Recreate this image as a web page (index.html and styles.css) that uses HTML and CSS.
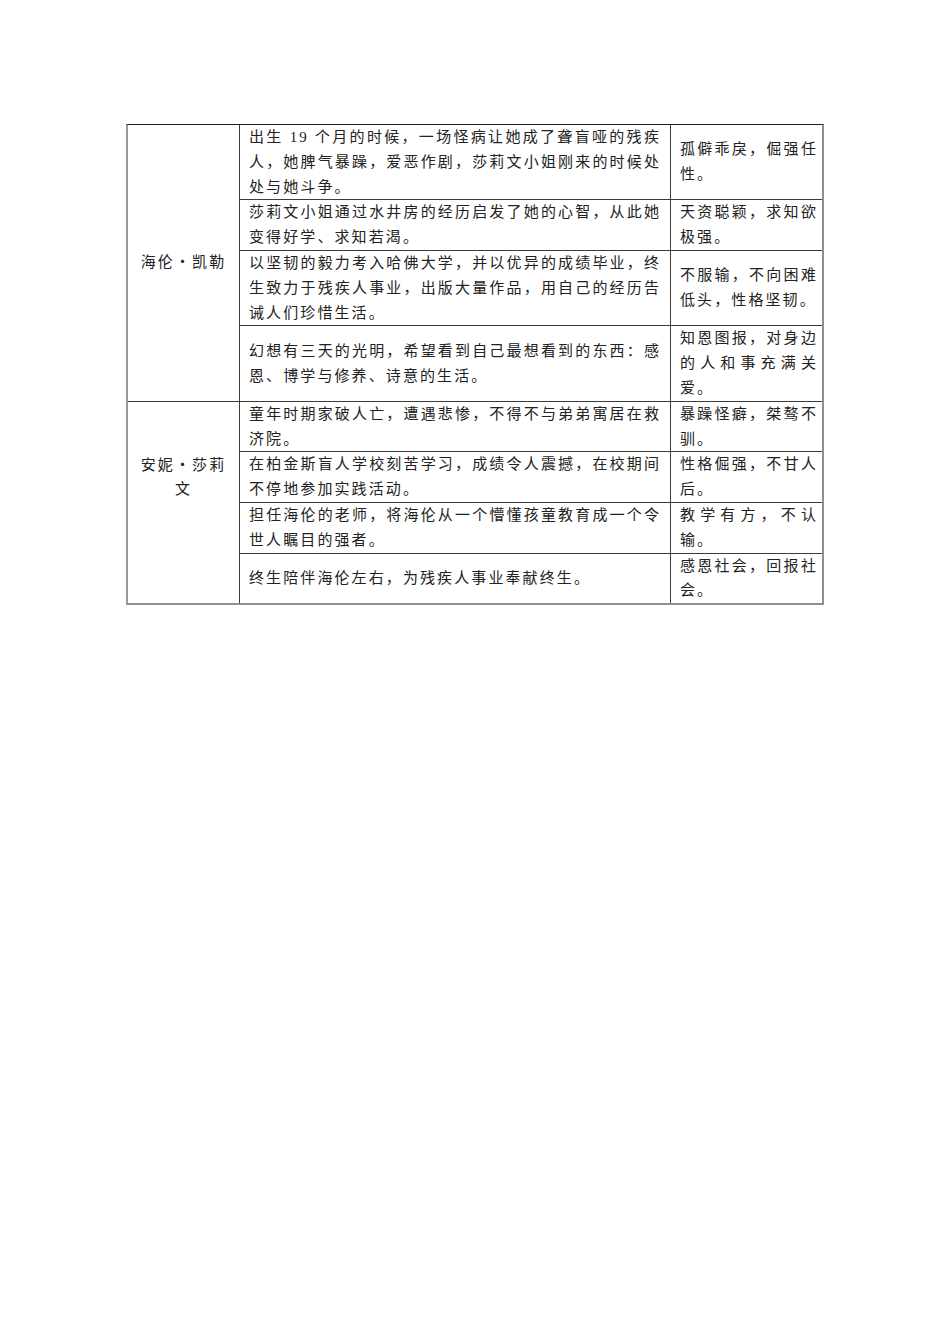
FILE: index.html
```html
<!DOCTYPE html>
<html lang="zh-CN">
<head>
<meta charset="utf-8">
<title>人物表</title>
<link rel="stylesheet" href="styles.css">
</head>
<body>
<div class="page">
  <table class="sheet">
    <colgroup>
      <col class="c-name">
      <col class="c-deed">
      <col class="c-trait">
    </colgroup>
    <tbody>
      <tr>
        <td class="name" rowspan="4">海伦・凯勒</td>
        <td class="deed">出生 19 个月的时候，一场怪病让她成了聋盲哑的残疾人，她脾气暴躁，爱恶作剧，莎莉文小姐刚来的时候处处与她斗争。</td>
        <td class="trait">孤僻乖戾，倔强任性。</td>
      </tr>
      <tr>
        <td class="deed">莎莉文小姐通过水井房的经历启发了她的心智，从此她变得好学、求知若渴。</td>
        <td class="trait">天资聪颖，求知欲极强。</td>
      </tr>
      <tr>
        <td class="deed">以坚韧的毅力考入哈佛大学，并以优异的成绩毕业，终生致力于残疾人事业，出版大量作品，用自己的经历告诫人们珍惜生活。</td>
        <td class="trait">不服输，不向困难低头，性格坚韧。</td>
      </tr>
      <tr class="group-end">
        <td class="deed">幻想有三天的光明，希望看到自己最想看到的东西：感恩、博学与修养、诗意的生活。</td>
        <td class="trait">知恩图报，对身边的人和事充满关爱。</td>
      </tr>
      <tr>
        <td class="name name-low" rowspan="4">安妮・莎莉文</td>
        <td class="deed">童年时期家破人亡，遭遇悲惨，不得不与弟弟寓居在救济院。</td>
        <td class="trait">暴躁怪癖，桀骜不驯。</td>
      </tr>
      <tr>
        <td class="deed">在柏金斯盲人学校刻苦学习，成绩令人震撼，在校期间不停地参加实践活动。</td>
        <td class="trait">性格倔强，不甘人后。</td>
      </tr>
      <tr>
        <td class="deed">担任海伦的老师，将海伦从一个懵懂孩童教育成一个令世人瞩目的强者。</td>
        <td class="trait">教学有方，不认输。</td>
      </tr>
      <tr class="last">
        <td class="deed">终生陪伴海伦左右，为残疾人事业奉献终生。</td>
        <td class="trait">感恩社会，回报社会。</td>
      </tr>
    </tbody>
  </table>
</div>
</body>
</html>
```

FILE: styles.css
```css
html, body {
  margin: 0;
  padding: 0;
  background: #ffffff;
}

.page {
  padding: 124px 0 0 126px;
}

.sheet {
  border-collapse: separate;
  border-spacing: 0;
  table-layout: fixed;
  width: 698px;
  border-top: 1px solid #1e1e1e;
  border-left: 2px solid #9a9a9a;
  border-right: 2px solid #8e8e8e;
  border-bottom: 2px solid #8e8e8e;
  font-family: "Liberation Serif", "Noto Sans CJK SC", serif;
  font-size: 15px;
  line-height: 24.8px;
  letter-spacing: 2.1px;
  color: #222222;
}

.c-name { width: 112px; }
.c-deed { width: 431px; }
.c-trait { width: 151px; }

.sheet td {
  box-sizing: border-box;
  padding: 0;
  vertical-align: middle;
  text-align: justify;
  border-bottom: 1px solid #3c3c3c;
  border-right: 1px solid #3c3c3c;
}

.sheet td.trait {
  border-right: none;
  padding: 0 4px 0 9px;
}

.sheet td.deed {
  padding: 0 9px 0 9px;
}

.sheet td.name {
  text-align: center;
  padding: 0 10px;
}

.sheet td.name-low {
  border-bottom: none;
  padding-bottom: 50px;
}

.sheet tr.last td {
  border-bottom: none;
}
```
